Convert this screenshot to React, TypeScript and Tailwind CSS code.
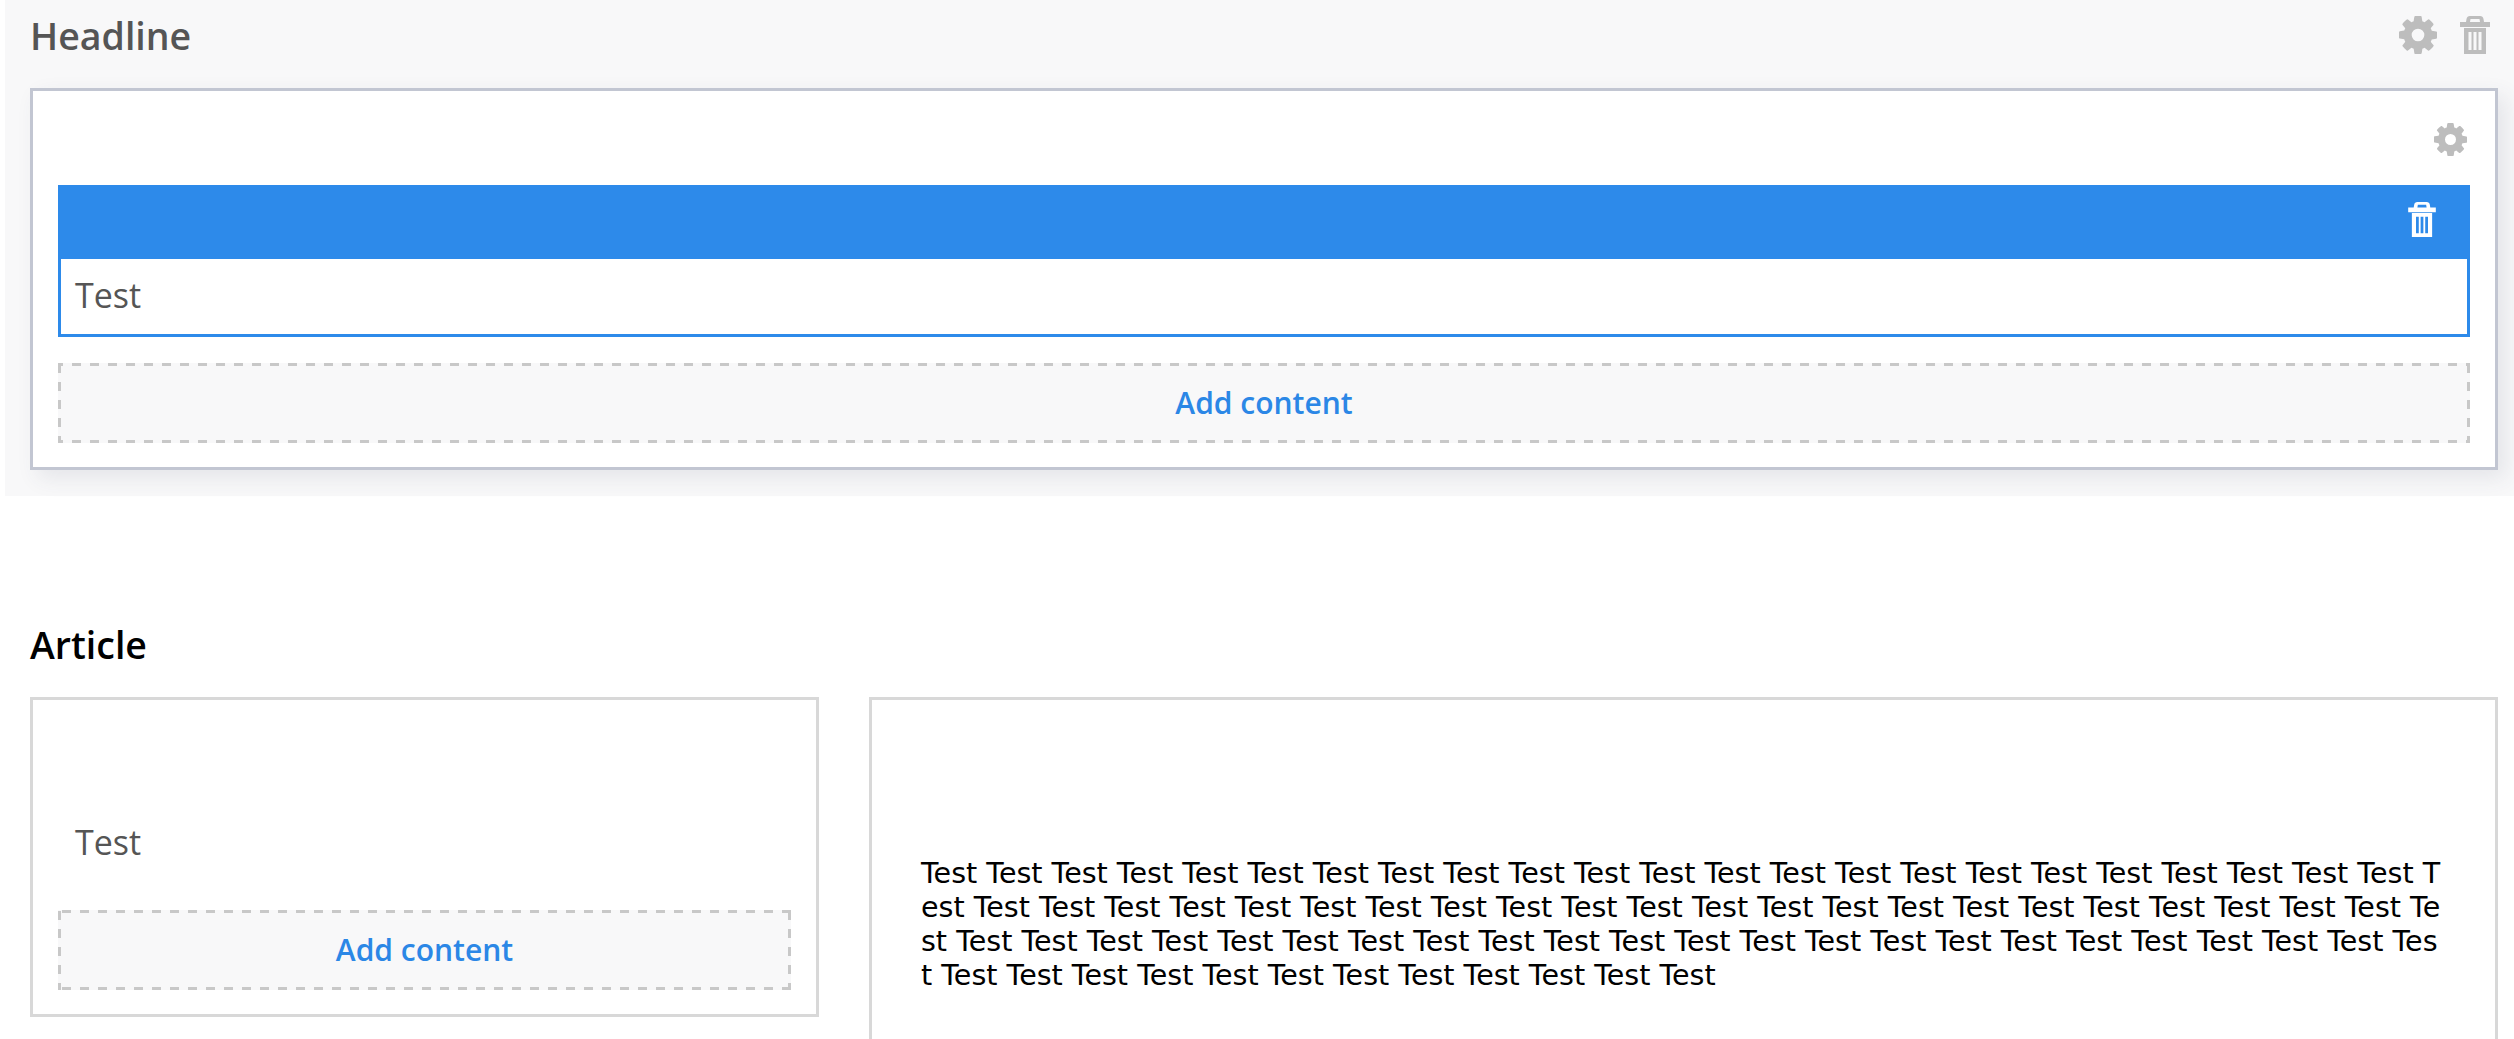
const cog =
  "M1152 896q0-106-75-181t-181-75-181 75-75 181 75 181 181 75 181-75 75-181zm512-109v222q0 12-8 23t-20 13l-185 28q-19 54-39 91 35 50 107 138 10 12 10 25t-9 23q-27 37-99 108t-94 71q-12 0-26-9l-138-108q-44 23-91 38-16 136-29 186-7 28-36 28h-222q-14 0-24.500-8.500t-11.500-21.500l-28-184q-49-16-90-37l-141 107q-10 9-25 9-14 0-25-11-126-114-165-168-7-10-7-23 0-12 8-23 15-21 51-66.500t54-70.500q-27-50-41-99l-183-27q-13-2-21-12.500t-8-23.500v-222q0-12 8-23t19-13l186-28q14-46 39-92-40-57-107-138-10-12-10-24 0-10 9-23 26-36 98.500-107.500t94.500-71.500q13 0 26 10l138 107q44-23 91-38 16-136 29-186 7-28 36-28h222q14 0 24.500 8.500t11.500 21.500l28 184q49 16 90 37l142-107q9-9 24-9 13 0 25 10 129 119 165 170 7 8 7 22 0 12-8 23-15 21-51 66.500t-54 70.500q26 50 41 98l183 28q13 2 21 12.500t8 23.500z";

const Cog = ({ className }: { className: string }) => (
  <svg viewBox="128 128 1536 1536" className={className} fill="currentColor">
    <path d={cog} />
  </svg>
);

// square bin with handle, three slots cut out of the body
const Trash = ({ className }: { className: string }) => (
  <svg viewBox="0 0 30 38" className={className} fill="currentColor">
    <path fillRule="evenodd" d="M10 0h10q3 0 3.500 3l.5 3h6v5H0V6h6l.5-3Q7 0 10 0zm.5 3L10 6h10l-.5-3z" />
    <path fillRule="evenodd" d="M4 12h22v26H4zM8.500 16v18h3V16zm5 0v18h3V16zm5 0v18h3V16z" />
  </svg>
);

// long dashes, 9 on 9 off, which a css dashed border won't give at this thickness
const AddContent = ({ phase }: { phase: string }) => (
  <div
    className={`h-[80px] pb-[2px] bg-[#f8f8f9] [background-image:linear-gradient(90deg,#c8c8c8_9px,transparent_9px),linear-gradient(90deg,#c8c8c8_9px,transparent_9px),linear-gradient(180deg,#c8c8c8_9px,transparent_9px),linear-gradient(180deg,#c8c8c8_9px,transparent_9px)] [background-size:18px_3px,18px_3px,3px_18px,3px_18px] [background-repeat:repeat-x,repeat-x,repeat-y,repeat-y] flex items-center justify-center text-[30px] font-semibold text-[#2b87e6] ${phase}`}
  >
    Add content
  </div>
);

const words = Array(82).fill("Test").join(" ");

export default function App() {
  return (
    <div className="bg-white h-[1039px] overflow-hidden font-['Open_Sans',sans-serif]">
      {/* Headline */}
      <div className="ml-[5px] h-[496px] bg-[#f8f8f9] pl-[25px] pr-[16px]">
        <div className="h-[88px] flex items-start justify-between">
          <h2 className="pt-[11px] text-[37.500px] leading-[50px] text-[#555555] font-[550]">Headline</h2>
          <div className="flex gap-[23px] pt-[16px] pr-[8px] text-[#bdbdbd]">
            <Cog className="w-[38px] h-[38px]" />
            <Trash className="w-[30px] h-[38px]" />
          </div>
        </div>
        <div className="h-[382px] border-[3px] border-[#c2c6d2] bg-white shadow-[8px_8px_20px_rgba(60,70,100,0.1)] px-[25px]">
          <div className="h-[94px] flex justify-end pt-[32px] pr-[3px] text-[#bdbdbd]">
            <Cog className="w-[33px] h-[33px]" />
          </div>
          <div className="h-[74px] bg-[#2d8aea] flex justify-end pt-[17px] pr-[34px] text-white">
            <Trash className="w-[28px] h-[35px]" />
          </div>
          <div className="h-[78px] pb-[2px] border-x-[3px] border-b-[3px] border-[#2d8aea] flex items-center pl-[14px] text-[34px] text-[#555555]">
            Test
          </div>
          <div className="mt-[26px]">
            <AddContent phase="[background-position:-4px_0,-4px_100%,0_1px,100%_1px]" />
          </div>
        </div>
      </div>

      {/* Article */}
      <div className="pl-[30px] pr-[16px]">
        <h2 className="pt-[124px] h-[201px] text-[37.500px] leading-[50px] text-black font-[550]">Article</h2>
        <div className="flex gap-[50px] items-start">
          <div className="w-[789px] h-[320px] border-[3px] border-[#d8d8d8] px-[25px]">
            <div className="h-[210px] pt-[120px] pl-[17px] text-[34px] leading-[45px] text-[#555555]">Test</div>
            <AddContent phase="[background-position:4px_0,4px_100%,0_1px,100%_1px]" />
          </div>
          <div className="flex-1 h-[400px] border-[3px] border-[#d8d8d8] pt-[156px] pl-[49px] pr-[50px]">
            <p className="text-[28.550px] leading-[34px] text-black break-all font-['DejaVu_Sans',sans-serif]">{words}</p>
          </div>
        </div>
      </div>
    </div>
  );
}
